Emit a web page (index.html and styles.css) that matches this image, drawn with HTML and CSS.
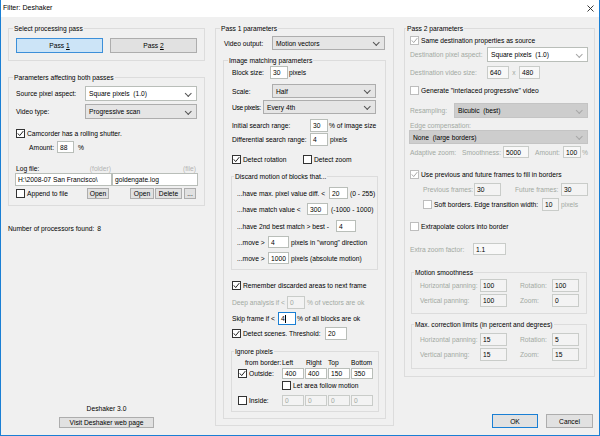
FILE: index.html
```html
<!DOCTYPE html>
<html>
<head>
<meta charset="utf-8">
<title>Filter: Deshaker</title>
<link rel="stylesheet" href="styles.css">
</head>
<body>
<div class="window">
  <div class="titlebar">
    <span class="title">Filter: Deshaker</span>
    <svg class="close" width="7" height="7" viewBox="0 0 7 7"><path d="M0.5 0.5 L6.5 6.5 M6.5 0.5 L0.5 6.5" stroke="#222" stroke-width="0.9" fill="none"/></svg>
  </div>
  <div class="main">
    <!-- Column 1 -->
    <div class="col col1">
      <div class="group gA">
        <span class="legend">Select processing pass</span>
        <div class="row h15 gap7">
          <div class="btn pass on w87"><span>Pass <u>1</u></span></div>
          <div class="btn w87"><span>Pass <u>2</u></span></div>
        </div>
      </div>
      <div class="group gB">
        <span class="legend">Parameters affecting both passes</span>
        <div class="row h15"><span class="w69">Source pixel aspect:</span><div class="sel white w112">Square pixels&nbsp; (1.0)</div></div>
        <div class="row h15 mt3"><span class="w69">Video type:</span><div class="sel w112">Progressive scan</div></div>
        <div class="row h12 mt8"><span class="cb"><svg viewBox="0 0 7 7"><polyline points="0.8,3.4 2.7,5.6 6.3,1.1"/></svg></span><span>Camcorder has a rolling shutter.</span></div>
        <div class="row h12 mt2"><span class="w41 ta-r pr3">Amount:</span><span class="tb w17">88</span><span class="ml4">%</span></div>
        <div class="row h10 mt10"><span class="w95 split"><span>Log file:</span><span class="faint">(folder)</span></span><span class="w85 ta-r faint">(file)</span></div>
        <div class="row h13 mx-1"><span class="tb w97">H:\2008-07 San Francisco\</span><span class="tb w86">goldengate.log</span></div>
        <div class="row h11 mt2">
          <span class="w71 chk"><span class="cb"></span><span>Append to file</span></span>
          <span class="btn w22">Open</span>
          <span class="btn w24 ml21">Open</span>
          <span class="btn w27 ml1">Delete</span>
          <span class="btn w12 ml2">...</span>
        </div>
      </div>
      <div class="procs">Number of processors found:<span class="ml3">8</span></div>
      <div class="about">
        <span class="h9">Deshaker 3.0</span>
        <span class="btn w95 h14 mt4">Visit Deshaker web page</span>
      </div>
    </div>

    <!-- Column 2 -->
    <div class="col col2">
      <div class="group gP1">
        <span class="legend">Pass 1 parameters</span>
        <div class="row h14 mx1"><span class="w48">Video output:</span><div class="sel w113">Motion vectors</div></div>
        <div class="group gIM">
          <span class="legend">Image matching parameters</span>
          <div class="row h13"><span class="w38">Block size:</span><span class="tb w18">30</span><span class="ml1">pixels</span></div>
          <div class="row h14 mt5"><span class="w40">Scale:</span><div class="sel w104">Half</div></div>
          <div class="row h14 mt2"><span class="w31 tight">Use pixels:</span><div class="sel w113">Every 4th</div></div>
          <div class="row h13 mt5"><span class="w78">Initial search range:</span><span class="tb w18">30</span><span class="ml1">% of image size</span></div>
          <div class="row h13 mt1"><span class="w78">Differential search range:</span><span class="tb w18">4</span><span class="ml2">pixels</span></div>
          <div class="row h11 mt8">
            <span class="w71 chk"><span class="cb"><svg viewBox="0 0 7 7"><polyline points="0.8,3.4 2.7,5.6 6.3,1.1"/></svg></span><span>Detect rotation</span></span>
            <span class="chk"><span class="cb"></span><span>Detect zoom</span></span>
          </div>
          <div class="group gDM">
            <span class="legend lg3">Discard motion of blocks that...</span>
            <div class="row h12"><span class="w92">...have max. pixel value diff. &lt;</span><span class="tb w19">20</span><span class="ml2">(0 - 255)</span></div>
            <div class="row h12 mt4"><span class="w70">...have match value &lt;</span><span class="tb w21">300</span><span class="ml3">(-1000 - 1000)</span></div>
            <div class="row h12 mt5"><span class="w99">...have 2nd best match &gt; best -</span><span class="tb w20">4</span></div>
            <div class="row h12 mt4"><span class="w31">...move &gt;</span><span class="tb w21">4</span><span class="ml2">pixels in "wrong" direction</span></div>
            <div class="row h12 mt4"><span class="w31">...move &gt;</span><span class="tb w21">1000</span><span class="ml2">pixels (absolute motion)</span></div>
          </div>
          <div class="row h11 mt10"><span class="cb"><svg viewBox="0 0 7 7"><polyline points="0.8,3.4 2.7,5.6 6.3,1.1"/></svg></span><span>Remember discarded areas to next frame</span></div>
          <div class="row h13 mt5"><span class="w55 muted">Deep analysis if &lt;</span><span class="tb dis w18">0</span><span class="ml2 muted">% of vectors are ok</span></div>
          <div class="row h13 mt3"><span class="w46">Skip frame if &lt;</span><span class="tb focus w18">4<span class="caret"></span></span><span class="ml1">% of all blocks are ok</span></div>
          <div class="row h13 mt2"><span class="cb"><svg viewBox="0 0 7 7"><polyline points="0.8,3.4 2.7,5.6 6.3,1.1"/></svg></span><span class="w82">Detect scenes. Threshold:</span><span class="tb w22">20</span></div>
          <div class="group gIG">
            <span class="legend lg3">Ignore pixels</span>
            <div class="row h9">
              <span class="w37 ml7">from border:</span><span class="w24">Left</span><span class="w22">Right</span><span class="w23">Top</span><span>Bottom</span>
            </div>
            <div class="row h12">
              <span class="w44 chk"><span class="cb"><svg viewBox="0 0 7 7"><polyline points="0.8,3.4 2.7,5.6 6.3,1.1"/></svg></span><span>Outside:</span></span>
              <span class="quad"><span class="tb w22">400</span><span class="tb w22">400</span><span class="tb w22">150</span><span class="tb w22">350</span></span>
            </div>
            <div class="row h11 mt1"><span class="ml44 cb"></span><span>Let area follow motion</span></div>
            <div class="row h12 mt3">
              <span class="w44 chk"><span class="cb"></span><span>Inside:</span></span>
              <span class="quad"><span class="tb dis w22">0</span><span class="tb dis w22">0</span><span class="tb dis w22">0</span><span class="tb dis w22">0</span></span>
            </div>
          </div>
        </div>
      </div>
    </div>

    <!-- Column 3 -->
    <div class="col col3">
      <div class="group gP2">
        <span class="legend lg1">Pass 2 parameters</span>
        <div class="row h11"><span class="cb dis"><svg viewBox="0 0 7 7"><polyline points="0.8,3.4 2.7,5.6 6.3,1.1"/></svg></span><span>Same destination properties as source</span></div>
        <div class="row h15 mt1"><span class="w77 muted">Destination pixel aspect:</span><div class="sel white dimchev w101">Square pixels&nbsp; (1.0)</div></div>
        <div class="row h13 mt4"><span class="w77 muted">Destination video size:</span><span class="tb dis2 w22">640</span><span class="w10 ta-c muted">x</span><span class="tb dis2 w21">480</span></div>
        <div class="row h11 mt6"><span class="cb dis"></span><span>Generate "interlaced progressive" video</span></div>
        <div class="row h15 mt7"><span class="w44 muted">Resampling:</span><div class="sel dis w134">Bicubic&nbsp; (best)</div></div>
        <div class="row h9 mt3"><span class="muted">Edge compensation:</span></div>
        <div class="row h14"><div class="sel dis w179 ml-1">None&nbsp; (large borders)</div></div>
        <div class="row h12 mt2">
          <span class="w52 muted">Adaptive zoom:</span><span class="w41 muted">Smoothness:</span><span class="tb dis2 w26">5000</span>
          <span class="w28 ml6 muted">Amount:</span><span class="tb dis2 w18">100</span><span class="ml1 muted">%</span>
        </div>
        <div class="row h11 mt11"><span class="cb dis"><svg viewBox="0 0 7 7"><polyline points="0.8,3.4 2.7,5.6 6.3,1.1"/></svg></span><span>Use previous and future frames to fill in borders</span></div>
        <div class="row h13 mt3 ml13">
          <span class="w51 muted">Previous frames:</span><span class="tb dis w27">30</span>
          <span class="w46 ml14 muted">Future frames:</span><span class="tb dis w27">30</span>
        </div>
        <div class="row h13 mt2 ml13"><span class="cb dis"></span><span class="w108">Soft borders. Edge transition width:</span><span class="tb dis w17">10</span><span class="ml2 muted">pixels</span></div>
        <div class="row h11 mt10"><span class="cb dis"></span><span>Extrapolate colors into border</span></div>
        <div class="row h12 mt11"><span class="w63 muted">Extra zoom factor:</span><span class="tb dis2 w33">1.1</span></div>
        <div class="group gMS">
          <span class="legend lg3">Motion smoothness</span>
          <div class="row h13"><span class="w60 muted">Horizontal panning:</span><span class="tb dis w27">100</span><span class="w32 ml13 muted">Rotation:</span><span class="tb dis w27">100</span></div>
          <div class="row h13 mt2"><span class="w60 muted">Vertical panning:</span><span class="tb dis w27">100</span><span class="w32 ml13 muted">Zoom:</span><span class="tb dis w27">0</span></div>
        </div>
        <div class="group gMC">
          <span class="legend lg3">Max. correction limits (in percent and degrees)</span>
          <div class="row h13"><span class="w60 muted">Horizontal panning:</span><span class="tb dis w27">15</span><span class="w32 ml13 muted">Rotation:</span><span class="tb dis w27">5</span></div>
          <div class="row h13 mt2"><span class="w60 muted">Vertical panning:</span><span class="tb dis w27">15</span><span class="w32 ml13 muted">Zoom:</span><span class="tb dis w27">15</span></div>
        </div>
      </div>
      <div class="dlg-buttons">
        <span class="btn default w46">OK</span>
        <span class="btn w47">Cancel</span>
      </div>
    </div>
  </div>
</div>
</body>
</html>
```

FILE: styles.css
```css
* { box-sizing: border-box; margin: 0; padding: 0; }

html, body { width: 600px; height: 436px; overflow: hidden; }

body {
  background: #f0f0f0;
  font-family: "Liberation Sans", Arial, sans-serif;
  font-size: 6.7px;
  line-height: 9px;
  color: #000;
}

.window {
  width: 600px;
  height: 436px;
  border: 1px solid #1a7fd4;
  border-top: none;
  display: flex;
  flex-direction: column;
  background: #f0f0f0;
}

.titlebar {
  height: 17px;
  flex: none;
  background: #fff;
  display: flex;
  justify-content: space-between;
  align-items: flex-start;
  padding: 3px 5px 0 2px;
}
.title { font-size: 7px; line-height: 9px; }
.close { margin-top: 2px; }

.main {
  flex: 1;
  display: flex;
  padding: 11px 4px 7px 7px;
}

.col { display: flex; flex-direction: column; flex: none; }
.col1 { width: 197px; margin-right: 10px; }
.col2 { width: 179px; margin-right: 10px; }
.col3 { width: 191px; }

/* group boxes */
.group { position: relative; border: 1px solid #dcdcdc; flex: none; }
.legend {
  position: absolute;
  top: -5px;
  left: 4px;
  padding: 0 1px;
  background: #f0f0f0;
  white-space: nowrap;
  line-height: 9px;
}
.lg3 { left: 2px; }
.lg1 { left: 1px; }

.gA { padding: 9px 7px 7px; }
.gB { margin-top: 16px; padding: 8px 7px 6px; }
.gP1 { height: 398px; padding: 7px 7px 6px; }
.gIM { margin-top: 10px; padding: 5px 0 6px 8px; }
.gDM { width: 147px; margin: 11px 0 0 -1px; padding: 10px 0 5px 5px; }
.gIG { width: 148px; margin: 11px 0 0 -1px; padding: 6px 0 5px 6px; }
.gP2 { padding: 6px 6px 7px 5px; }
.gMS { width: 176px; margin: 17px 0 0 1px; padding: 6px 0 6px 8px; }
.gMC { width: 176px; margin: 10px 0 0 1px; padding: 8px 0 7px 8px; }

/* rows */
.row { display: flex; align-items: center; white-space: nowrap; }
.row > * { flex: none; }
.chk { display: flex; align-items: center; }
.split { display: flex; justify-content: space-between; }
.quad { display: flex; gap: 1px; }
.gap7 { gap: 7px; }
.tight { letter-spacing: -0.35px; }

.h9 { height: 9px; } .h10 { height: 10px; } .h11 { height: 11px; }
.h12 { height: 12px; } .h13 { height: 13px; } .h14 { height: 14px; } .h15 { height: 15px; }

.mt1 { margin-top: 1px; } .mt2 { margin-top: 2px; } .mt3 { margin-top: 3px; }
.mt4 { margin-top: 4px; } .mt5 { margin-top: 5px; } .mt6 { margin-top: 6px; }
.mt7 { margin-top: 7px; } .mt8 { margin-top: 8px; } .mt10 { margin-top: 10px; }
.mt11 { margin-top: 11px; }

.ml1 { margin-left: 1px; } .ml2 { margin-left: 2px; } .ml3 { margin-left: 3px; }
.ml4 { margin-left: 4px; } .ml6 { margin-left: 6px; } .ml7 { margin-left: 7px; }
.ml13 { margin-left: 13px; } .ml14 { margin-left: 14px; } .ml21 { margin-left: 21px; }
.ml44 { margin-left: 44px; } .ml-1 { margin-left: -1px; }
.mx1 { margin-left: 1px; margin-right: 1px; }
.mx-1 { margin-left: -1px; margin-right: -1px; }
.pr3 { padding-right: 3px; }
.ta-r { text-align: right; }
.ta-c { text-align: center; }

.w10 { width: 10px; } .w12 { width: 12px; } .w17 { width: 17px; } .w18 { width: 18px; }
.w19 { width: 19px; } .w20 { width: 20px; } .w21 { width: 21px; } .w22 { width: 22px; }
.w23 { width: 23px; } .w24 { width: 24px; } .w26 { width: 26px; } .w27 { width: 27px; }
.w28 { width: 28px; } .w31 { width: 31px; } .w32 { width: 32px; } .w33 { width: 33px; }
.w37 { width: 37px; } .w38 { width: 38px; } .w40 { width: 40px; } .w41 { width: 41px; }
.w44 { width: 44px; } .w46 { width: 46px; } .w47 { width: 47px; } .w48 { width: 48px; }
.w51 { width: 51px; } .w52 { width: 52px; } .w55 { width: 55px; } .w60 { width: 60px; }
.w63 { width: 63px; } .w69 { width: 69px; } .w70 { width: 70px; } .w71 { width: 71px; }
.w77 { width: 77px; } .w78 { width: 78px; } .w82 { width: 82px; } .w85 { width: 85px; }
.w86 { width: 86px; } .w87 { width: 87px; } .w92 { width: 92px; } .w95 { width: 95px; }
.w97 { width: 97px; } .w99 { width: 99px; } .w101 { width: 101px; } .w104 { width: 104px; }
.w108 { width: 108px; } .w112 { width: 112px; } .w113 { width: 113px; } .w134 { width: 134px; }
.w179 { width: 179px; }

/* text colours */
.muted { color: #a2a9a2; }
.faint { color: #b3b3b3; }

/* controls */
.tb {
  height: 100%;
  display: flex;
  align-items: center;
  padding: 0 2px;
  background: #fff;
  border: 1px solid #b9beb9;
  overflow: hidden;
}
.tb.dis { background: #f3f3f3; border-color: #c9ccc9; }
.tb.dis2 { background: #f8f8f8; border-color: #c9ccc9; }
.gIM .tb.dis { color: #a2a9a2; }
.tb.focus { border-color: #1a7fd4; }
.caret { display: inline-block; width: 1px; height: 8px; background: #000; margin-left: 0.5px; }

.sel {
  position: relative;
  height: 100%;
  display: flex;
  align-items: center;
  padding: 0 3px;
  background: #e5e5e5;
  border: 1px solid #adadad;
}
.sel::after {
  content: "";
  position: absolute;
  right: 6px;
  top: 50%;
  width: 3.5px;
  height: 3.5px;
  border-right: 1px solid #555;
  border-bottom: 1px solid #555;
  transform: translateY(-70%) rotate(45deg);
}
.sel.white { background: #fff; border-color: #b9beb9; }
.sel.dis { background: #cdcdcd; border-color: #c4c4c4; }
.sel.dis::after, .sel.dimchev::after { border-color: #a8a8a8; }

.btn {
  height: 100%;
  display: flex;
  align-items: center;
  justify-content: center;
  background: #e1e1e1;
  border: 1px solid #adadad;
  white-space: pre;
}
.btn.pass.on { background: #cce4f7; border-color: #3c8fd9; }
.btn.default { border-color: #1a7fd4; }

.cb {
  width: 9px;
  height: 9px;
  flex: none;
  margin-right: 2px;
  background: #fff;
  border: 1px solid #333;
  display: flex;
  align-items: center;
  justify-content: center;
}
.cb svg { width: 7px; height: 7px; display: block; }
.cb polyline { fill: none; stroke: #222; stroke-width: 1; }
.cb.dis { border-color: #bdbdbd; }
.cb.dis polyline { stroke: #a8a8a8; }

.procs { margin-top: 18px; height: 9px; white-space: nowrap; }

.about {
  margin-top: auto;
  display: flex;
  flex-direction: column;
  align-items: center;
}

.dlg-buttons {
  margin-top: auto;
  height: 14px;
  display: flex;
  justify-content: flex-end;
  gap: 8px;
  margin-right: 2px;
}
```
